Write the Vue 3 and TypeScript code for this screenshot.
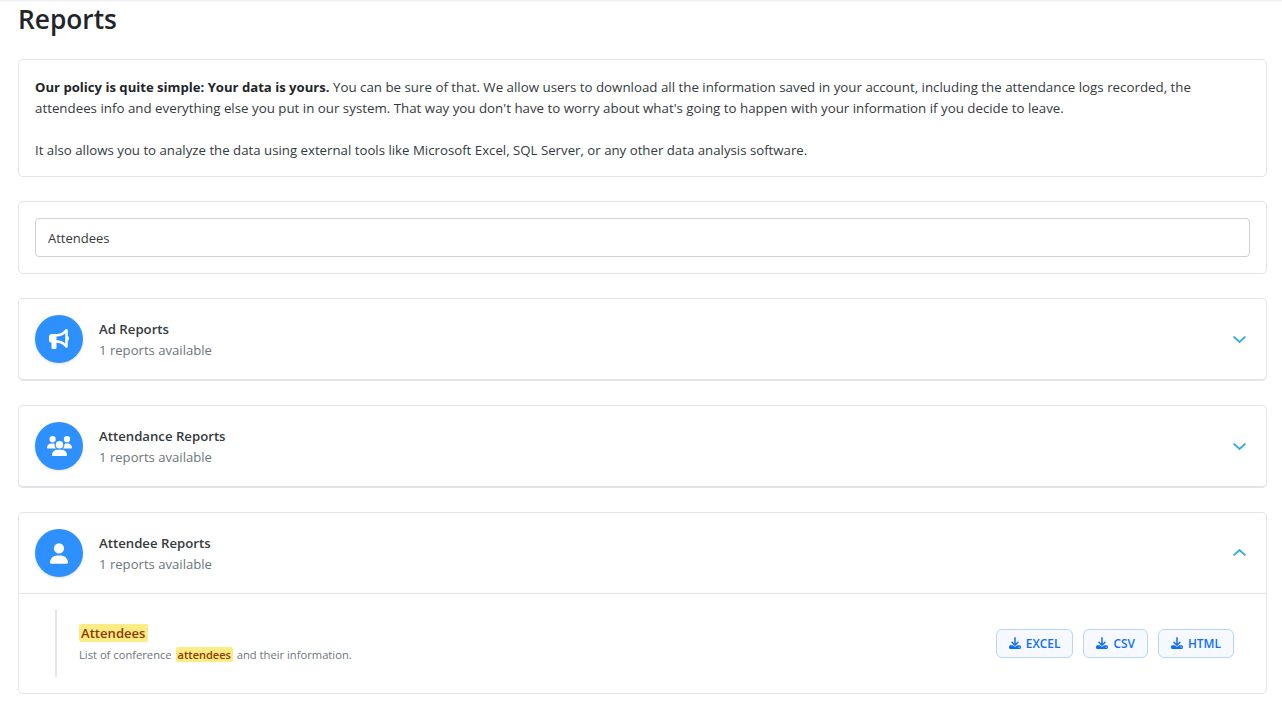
<script setup lang="ts">
interface Group { title: string; open: boolean; icon: string }
const groups: Group[] = [
  { title: 'Ad Reports', open: false, icon: 'ad' },
  { title: 'Attendance Reports', open: false, icon: 'users' },
  { title: 'Attendee Reports', open: true, icon: 'user' },
]
const formats = ['EXCEL', 'CSV', 'HTML']
</script>

<template>
  <div class="page">
    <div class="topline"></div>
    <h1 class="title">Reports</h1>
    <section class="card intro">
      <p class="first"><b>Our policy is quite simple: Your data is yours.</b> You can be sure of that. We allow users to download all the information saved in your account, including the attendance logs recorded, the attendees info and everything else you put in our system. That way you don't have to worry about what's going to happen with your information if you decide to leave.</p>
      <p class="second">It also allows you to analyze the data using external tools like Microsoft Excel, SQL Server, or any other data analysis software.</p>
    </section>
    <section class="card search">
      <input class="input" value="Attendees" />
    </section>
    <section v-for="g in groups" :key="g.title" class="card group" :class="{ closed: !g.open }">
      <div class="head">
        <span class="badge">
          <svg v-if="g.icon === 'ad'" viewBox="0 0 512 512" width="20" height="20" fill="#fff"><path d="M480 32c0-12.900-7.800-24.600-19.800-29.600s-25.700-2.200-34.900 6.900L381.700 53c-48 48-113.100 75-181 75H192 160 64c-35.300 0-64 28.700-64 64v96c0 35.300 28.700 64 64 64l0 128c0 17.700 14.300 32 32 32h64c17.700 0 32-14.300 32-32V352l8.700 0c67.900 0 133 27 181 75l43.600 43.600c9.200 9.200 22.900 11.900 34.900 6.900s19.800-16.600 19.800-29.600V300.400c18.600-8.800 32-32.500 32-60.400s-13.400-51.600-32-60.400V32zm-64 76.700V240 371.300C357.200 317.800 280.500 288 200.700 288H192V192h8.700c79.800 0 156.500-29.800 215.300-83.300z"/></svg>
          <svg v-else-if="g.icon === 'users'" viewBox="0 0 640 512" width="25" height="20" fill="#fff"><path d="M144 0a80 80 0 1 1 0 160A80 80 0 1 1 144 0zM512 0a80 80 0 1 1 0 160A80 80 0 1 1 512 0zM0 298.700C0 239.800 47.800 192 106.700 192h42.700c15.900 0 31 3.500 44.600 9.700c-1.300 7.200-1.900 14.700-1.900 22.300c0 38.200 16.800 72.500 43.300 96c-.2 0-.4 0-.7 0H21.300C9.600 320 0 310.400 0 298.700zM405.300 320c-.2 0-.4 0-.7 0c26.600-23.500 43.300-57.800 43.300-96c0-7.600-.7-15-1.900-22.300c13.600-6.300 28.700-9.700 44.600-9.700h42.700C592.200 192 640 239.800 640 298.700c0 11.800-9.600 21.300-21.300 21.300H405.300zM224 224a96 96 0 1 1 192 0 96 96 0 1 1 -192 0zM128 485.300C128 411.700 187.700 352 261.300 352H378.700C452.300 352 512 411.700 512 485.300c0 14.700-11.900 26.700-26.700 26.700H154.700c-14.700 0-26.700-11.900-26.700-26.700z"/></svg>
          <svg v-else viewBox="0 0 448 512" width="18" height="21" fill="#fff"><path d="M224 256A128 128 0 1 0 224 0a128 128 0 1 0 0 256zm-45.700 48C79.800 304 0 383.800 0 482.300C0 498.700 13.300 512 29.700 512H418.300c16.400 0 29.700-13.300 29.700-29.700C448 383.800 368.200 304 269.700 304H178.300z"/></svg>
        </span>
        <div class="meta">
          <div class="name">{{ g.title }}</div>
          <div class="count">1 reports available</div>
        </div>
        <svg class="chev" :class="{ up: g.open }" viewBox="0 0 13 7" width="13" height="7" fill="none" stroke="#2aa7e0" stroke-width="1.700"><path d="M.6.6l5.900 5.400L12.400.6"/></svg>
      </div>
      <div v-if="g.open" class="body">
        <div class="report">
          <div class="info">
            <div class="rname"><mark class="hl">Attendees</mark></div>
            <div class="rdesc">List of conference <mark class="hl">attendees</mark> and their information.</div>
          </div>
          <div class="actions">
            <button v-for="f in formats" :key="f" class="btn">
              <svg viewBox="0 0 512 512" width="12" height="12" fill="currentColor"><path d="M288 32c0-17.700-14.300-32-32-32s-32 14.300-32 32V274.700l-73.400-73.400c-12.500-12.500-32.800-12.500-45.300 0s-12.500 32.800 0 45.300l128 128c12.500 12.500 32.800 12.500 45.300 0l128-128c12.500-12.500 12.500-32.800 0-45.300s-32.800-12.500-45.300 0L288 274.700V32zM64 352c-35.300 0-64 28.700-64 64v32c0 35.300 28.700 64 64 64H448c35.300 0 64-28.700 64-64V416c0-35.300-28.700-64-64-64H346.500l-45.300 45.300c-25 25-65.500 25-90.500 0L165.500 352H64zm368 56a24 24 0 1 1 0 48 24 24 0 1 1 0-48z"/></svg>
              {{ f }}
            </button>
          </div>
        </div>
      </div>
    </section>
  </div>
</template>

<style>
html, body { margin: 0; background: #fff; overflow: hidden; }
</style>

<style scoped>
.page {
  box-sizing: border-box;
  width: 1282px;
  height: 706px;
  overflow: hidden;
  padding: 0 15px 0 18px;
  font-family: "Open Sans", "Noto Sans", sans-serif;
  font-size: 13.24px;
  color: #2b2f38;
  position: relative;
}
.topline {
  position: absolute;
  left: 0; right: 0; top: 0;
  height: 2px;
  background: linear-gradient(#efeff2, #fafafb);
}
.title {
  margin: 0;
  height: 59px;
  padding-top: 2px;
  box-sizing: border-box;
  font-size: 26.3px;
  line-height: 34px;
  font-weight: 600;
  color: #212529;
}
.card {
  box-sizing: border-box;
  border: 1px solid #e3e3e9;
  border-radius: 5px;
  background: #fff;
  margin-bottom: 24px;
}
.intro {
  height: 118px;
  padding: 17px 16px;
  line-height: 21px;
  color: #343a40;
}
.intro p { margin: 0; }
.intro .first { font-size: 13.32px; }
.intro b { color: #212529; font-size: 13.12px; }
.intro .second { margin-top: 21px; }
.search { height: 73px; padding: 16px; }
.input {
  display: block;
  box-sizing: border-box;
  width: 100%;
  height: 39px;
  padding: 0 12px;
  border: 1px solid #cfd0d8;
  border-radius: 4px;
  font: inherit;
  font-size: 13px;
  color: #343a40;
  outline: none;
}
.group.closed { height: 83px; border-bottom-width: 2px; }
.head {
  height: 80px;
  padding: 0 20px 0 16px;
  box-sizing: border-box;
  display: flex;
  align-items: center;
}
.badge {
  width: 48px;
  height: 48px;
  flex: none;
  border-radius: 50%;
  background: #2e8fff;
  display: flex;
  align-items: center;
  justify-content: center;
  box-shadow: 0 1px 3px rgba(0, 0, 0, .12);
}
.meta { margin-left: 16px; flex: 1; padding-top: 2px; }
.name { font-weight: 600; font-size: 13.2px; line-height: 21px; color: #343a40; }
.count { font-size: 13.12px; line-height: 21px; color: #6c757d; }
.chev.up { transform: translateY(-1px) rotate(180deg); }
.body {
  border-top: 1px solid #e3e3e9;
  height: 100px;
  padding: 16px 32px 16px 36px;
  box-sizing: border-box;
}
.report {
  height: 67px;
  border-left: 2px solid #e3e3e9;
  padding-left: 22px;
  display: flex;
  align-items: center;
  justify-content: space-between;
}
.info { margin-top: -2px; }
.rname { font-size: 13.1px; font-weight: 600; line-height: 20px; }
.rdesc { font-size: 11.2px; line-height: 17px; color: #6c757d; margin-top: 3px; }
.hl {
  background: #fdec84;
  color: #8a3a06;
  border-radius: 2px;
  padding: 0 2px;
}
.rdesc .hl { margin: 0 1px; font-size: 11px; font-weight: 600; }
.actions { display: flex; gap: 10px; }
.btn {
  height: 29px;
  padding: 0 12px 1px;
  display: flex;
  align-items: center;
  gap: 5px;
  border: 1px solid #b6d4fe;
  border-radius: 6px;
  background: #f6f9ff;
  color: #0d6efd;
  font: inherit;
  font-size: 11.9px;
  font-weight: 600;
}
</style>
